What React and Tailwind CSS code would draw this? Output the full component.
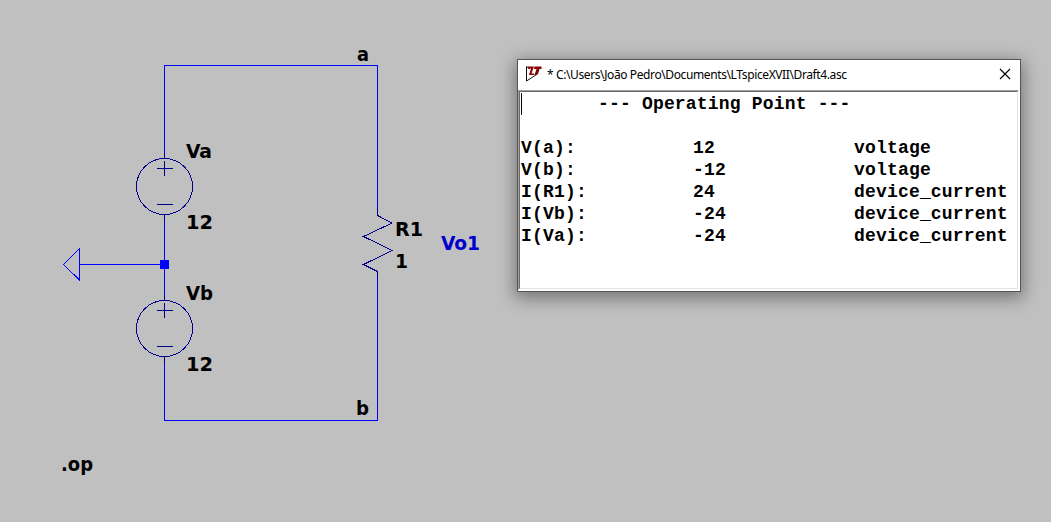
const LABELS = [
  { text: 'a', x: 357, y: 61, w: 12 },
  { text: 'Va', x: 186, y: 158, w: 26 },
  { text: '12', x: 186, y: 229, w: 27 },
  { text: 'Vb', x: 186, y: 300, w: 27 },
  { text: '12', x: 186, y: 371, w: 27 },
  { text: 'R1', x: 395, y: 236, w: 28 },
  { text: '1', x: 395, y: 268, w: 13 },
  { text: 'b', x: 356, y: 415, w: 13 },
  { text: '.op', x: 61, y: 471, w: 32 },
  { text: 'Vo1', x: 441, y: 250, w: 39, color: '#0000cc' },
];

const ROWS = [
  ['V(a):', '12', 'voltage'],
  ['V(b):', '-12', 'voltage'],
  ['I(R1):', '24', 'device_current'],
  ['I(Vb):', '-24', 'device_current'],
  ['I(Va):', '-24', 'device_current'],
];

function Source({ cy }) {
  return (
    <g stroke="#00008b" fill="none">
      <circle cx="164.5" cy={cy} r="28" />
      <path d={`M164.5 ${cy - 34}v6M164.5 ${cy + 28}v7M157 ${cy - 18}h16M164.5 ${cy - 25.5}v15M157 ${cy + 18}h16`} />
    </g>
  );
}

function Schematic() {
  return (
    <svg width="1051" height="522" className="block" fontFamily="'DejaVu Sans Condensed', 'DejaVu Sans', sans-serif" fontWeight="700" fontSize="20">
      <g shapeRendering="crispEdges" strokeWidth="1" fill="none">
        <path stroke="#0000ff" d="M164.5 153V65.5H377.5V210M377.5 277V420.5H164.5V362M164.5 220V295M79.5 264.5H164" />
        <path stroke="#0000ff" d="M79.5 248.5V280L63.5 264.5L79.5 248.5" />
        <path stroke="#00008b" d="M377.5 208V215.5L392 223L363.5 236.5L392 250.5L363.5 264.5L377.5 271.5V278" />
        <Source cy={186.5} />
        <Source cy={328.5} />
        <rect x="160" y="260" width="9" height="9" fill="#0000ff" />
      </g>
      {LABELS.map((l, i) => (
        <text key={i} x={l.x} y={l.y} fill={l.color || '#000'} textLength={l.w} lengthAdjust="spacingAndGlyphs">
          {l.text}
        </text>
      ))}
    </svg>
  );
}

function ResultWindow() {
  return (
    <section className="absolute left-[517px] top-[59px] flex h-[233px] w-[504px] flex-col border border-[#555] bg-white shadow-[0_4px_16px_2px_rgba(0,0,0,0.4)]">
      <header className="flex h-[30px] shrink-0 items-center pb-[2px] pl-[7px] pr-[9px]">
        <svg width="18" height="18" viewBox="0 0 18 18" className="shrink-0">
          <path d="M1.5 1.5V16L12.5 9L14 4M1.5 1.5L5 4" fill="none" stroke="#111" strokeWidth="1" />
          <path d="M3 1.5H9L6.5 8.5H9V10H4L6 3.5H3ZM9.5 1.5H16.5V4H14L12 10H9.5L11.5 4H9Z" fill="#8b0000" />
        </svg>
        <h1 className="ml-1 whitespace-pre pt-[2px] font-['Noto_Sans',sans-serif] text-[12px] leading-[20px] tracking-[-0.39px] text-black">
          {'* C:\\Users\\João Pedro\\Documents\\LTspiceXVII\\Draft4.asc'}
        </h1>
        <button aria-label="Close" className="ml-auto">
          <svg width="12" height="12" viewBox="0 0 12 12" className="block">
            <path d="M1 1L11 11M11 1L1 11" stroke="#000" strokeWidth="1.1" />
          </svg>
        </button>
      </header>
      <div className="mb-px mr-px flex grow border-b border-l border-r border-t border-b-white border-l-[#a0a0a0] border-r-white border-t-[#a0a0a0]">
        <div className="grow border border-b-[#e3e3e3] border-l-[#696969] border-r-[#e3e3e3] border-t-[#696969] font-['Liberation_Mono',monospace] text-[18px] font-bold leading-[22px] tracking-[0.18px] text-black">
          <div className="relative pt-px">
            <span className="absolute left-px top-px h-[22px] w-px bg-black" />
            <p className="whitespace-pre pl-[78px]">--- Operating Point ---</p>
            <div className="mt-[22px] pl-px">
              {ROWS.map((r) => (
                <div key={r[0]} className="grid grid-cols-[172px_161px_1fr]">
                  <span>{r[0]}</span>
                  <span>{r[1]}</span>
                  <span>{r[2]}</span>
                </div>
              ))}
            </div>
          </div>
        </div>
      </div>
    </section>
  );
}

export default function App() {
  return (
    <main className="relative h-[522px] w-[1051px] overflow-hidden bg-[#c0c0c0]">
      <Schematic />
      <ResultWindow />
    </main>
  );
}
